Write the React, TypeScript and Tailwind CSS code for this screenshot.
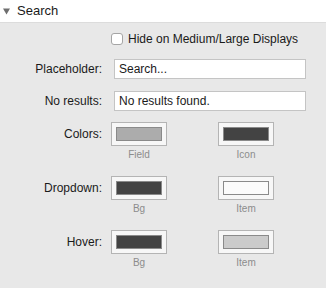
import React from "react";

function Swatch({ color, label }: { color: string; label: string }) {
  return (
    <div className="flex flex-col items-center w-[56px]">
      <div className="w-[56px] h-[24px] border border-[#b4b4b4] bg-[#f7f7f7] flex items-center justify-center">
        <div className="w-[46px] h-[14px] border border-[#8a8a8a]" style={{ backgroundColor: color }} />
      </div>
      <div className="mt-[3px] text-[10px] leading-[12px] text-[#8c8c8c]">{label}</div>
    </div>
  );
}

function SwatchRow({ label, a, b }: { label: string; a: [string, string]; b: [string, string] }) {
  return (
    <div className="flex items-start h-[54px]">
      <div className="w-[103px] text-right pr-[1px] h-[24px] leading-[24px] text-[12px] text-[#1a1a1a]">{label}</div>
      <div className="ml-[8px] flex gap-[51px]">
        <Swatch color={a[0]} label={a[1]} />
        <Swatch color={b[0]} label={b[1]} />
      </div>
    </div>
  );
}

export default function App() {
  return (
    <div
      className="w-[326px] h-[288px] bg-[#e8e8e8] overflow-hidden"
      style={{ fontFamily: '"Liberation Sans", Arial, sans-serif' }}
    >
      <div className="h-[23px] bg-white border-b border-[#dcdcdc] flex items-center pl-[3px]">
        <svg width="7" height="7" viewBox="0 0 7 7" className="mr-[7px]">
          <polygon points="0,0.5 7,0.5 3.5,6.5" fill="#6e6e6e" />
        </svg>
        <span className="text-[13px] text-[#1a1a1a]">Search</span>
      </div>
      <div className="h-[10px]" />
      <div className="flex items-center h-[12px] pl-[111px]">
        <div className="w-[12px] h-[12px] rounded-[3px] border border-[#a5a5a5] bg-white" />
        <span className="ml-[5px] text-[12px] text-[#1a1a1a]">Hide on Medium/Large Displays</span>
      </div>
      <div className="h-[14px]" />
      <div className="flex items-center h-[20px]">
        <div className="w-[102px] text-right text-[12px] text-[#1a1a1a]">Placeholder:</div>
        <div className="ml-[12px] w-[192px] h-[20px] bg-white border border-[#c4c4c4] text-[12px] leading-[18px] px-[4px] text-[#1a1a1a]">
          Search...
        </div>
      </div>
      <div className="h-[12px]" />
      <div className="flex items-center h-[20px]">
        <div className="w-[102px] text-right text-[12px] text-[#1a1a1a]">No results:</div>
        <div className="ml-[12px] w-[192px] h-[20px] bg-white border border-[#c4c4c4] text-[12px] leading-[18px] px-[4px] text-[#1a1a1a]">
          No results found.
        </div>
      </div>
      <div className="h-[11px]" />
      <SwatchRow label="Colors:" a={["#acacac", "Field"]} b={["#434343", "Icon"]} />
      <SwatchRow label="Dropdown:" a={["#434343", "Bg"]} b={["#fbfbfb", "Item"]} />
      <SwatchRow label="Hover:" a={["#434343", "Bg"]} b={["#cbcbcb", "Item"]} />
    </div>
  );
}
